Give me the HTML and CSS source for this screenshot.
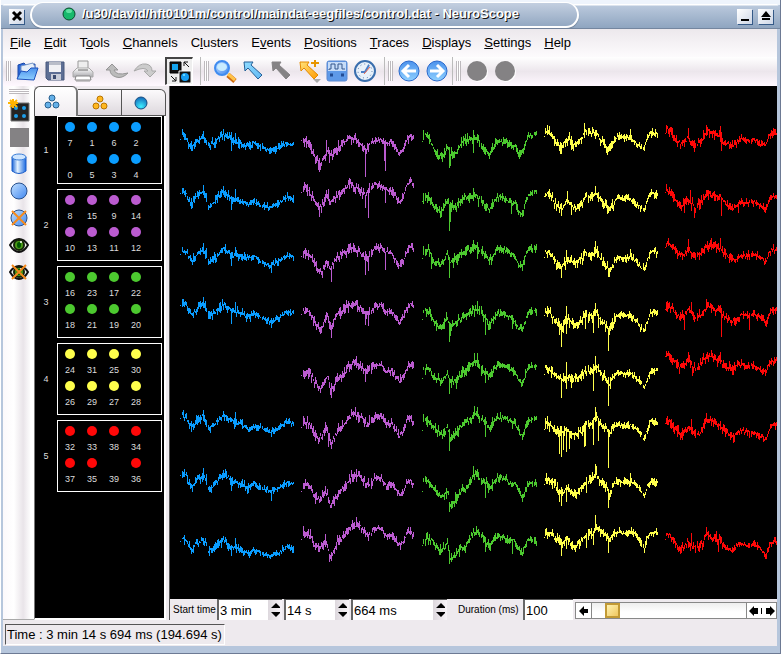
FILE: index.html
```
<!DOCTYPE html>
<html lang="en">
<head>
<meta charset="utf-8">
<title>NeuroScope</title>
<link rel="stylesheet" href="styles.css">
</head>
<body>
<svg width="0" height="0" class="defs" aria-hidden="true">
  <defs>
    <linearGradient id="blue" x1="0" y1="0" x2="1" y2="1"><stop offset="0" stop-color="#c4e2ff"/><stop offset="1" stop-color="#3f86f0"/></linearGradient>
    <linearGradient id="sky" x1="0" y1="0" x2="1" y2="1"><stop offset="0" stop-color="#8fdcff"/><stop offset="1" stop-color="#62b8f4"/></linearGradient>
    <linearGradient id="blueV" x1="0" y1="0" x2="0" y2="1"><stop offset="0" stop-color="#4c92ec"/><stop offset="1" stop-color="#8fd0ff"/></linearGradient>
    <linearGradient id="gold" x1="0" y1="0" x2="1" y2="1"><stop offset="0" stop-color="#ffe27a"/><stop offset="1" stop-color="#ff9a00"/></linearGradient>
    <linearGradient id="barrel" x1="0" y1="0" x2="1" y2="0"><stop offset="0" stop-color="#1c66d8"/><stop offset=".4" stop-color="#e4f3ff"/><stop offset="1" stop-color="#1c6ae0"/></linearGradient>
    <radialGradient id="aqua" cx=".5" cy=".8" r=".8"><stop offset="0" stop-color="#3ff0ff"/><stop offset="1" stop-color="#1166b8"/></radialGradient>
    <linearGradient id="paper" x1="0" y1="0" x2="0" y2="1"><stop offset="0" stop-color="#ffffff"/><stop offset="1" stop-color="#aaaaae"/></linearGradient>
  </defs>
  <symbol id="arrow" viewBox="0 0 24 24"><path d="M3 3h9l-2 3 11 10-4 4L7 9l-3 3z" stroke-width="1" stroke-linejoin="round"/></symbol>
  <symbol id="eye" viewBox="0 0 20 20"><path d="M1 10Q5 4 10 4t9 6q-4 7-9 7T1 10z" fill="#f4f4ee" stroke="#111" stroke-width="2"/><circle cx="10" cy="10" r="5" fill="#4a9a16" stroke="#152408" stroke-width="2"/><ellipse cx="10" cy="10" rx="2" ry="3" fill="#050"/><circle cx="12" cy="7" r="1" fill="#fff"/></symbol>
  <symbol id="trio" viewBox="0 0 16 16"><g stroke-width="1"><circle cx="8" cy="4" r="3"/><circle cx="4" cy="11" r="3"/><circle cx="12" cy="11" r="3"/></g></symbol>
</svg>

<div class="window">
  <header class="titlebar">
    <button class="winbtn" aria-label="Close"><svg width="12" height="12"><path d="M2 2l8 8M10 2l-8 8" stroke="#000" stroke-width="3"/></svg></button>
    <div class="caption"><svg width="14" height="14"><circle cx="7" cy="7" r="6" fill="#17b96c" stroke="#0a4a2c"/><ellipse cx="7" cy="4" rx="3" ry="2" fill="#5fe0a0"/></svg><h1>/u30/david/hft0101m/control/maindat-eegfiles/control.dat - NeuroScope</h1></div>
    <span class="fill"></span>
    <button class="winbtn" aria-label="Minimize"><svg width="12" height="12"><path d="M2 10h8" stroke="#000" stroke-width="2"/></svg></button>
    <button class="winbtn" aria-label="Maximize"><svg width="12" height="12"><path d="M6 1l5 6H1zM2 8h8v2H2z"/></svg></button>
  </header>

  <div class="content">
    <nav class="menu">
      <a href="#"><u>F</u>ile</a><a href="#"><u>E</u>dit</a><a href="#">T<u>o</u>ols</a><a href="#"><u>C</u>hannels</a><a href="#">C<u>l</u>usters</a><a href="#">E<u>v</u>ents</a><a href="#"><u>P</u>ositions</a><a href="#"><u>T</u>races</a><a href="#"><u>D</u>isplays</a><a href="#"><u>S</u>ettings</a><a href="#"><u>H</u>elp</a>
    </nav>

    <div class="toolbar">
      <i class="grip"></i>
      <button class="tool" aria-label="Open"><svg width="24" height="24"><path d="M3 20V6l6-2 2 2 9-1v8" fill="#2a68d8" stroke="#1a48a8"/><path d="M6 7l12-3 2 4v6H6z" fill="#e6eef8" stroke="#7796c8"/><path d="M2 20l4-8 6 1 4-4 7 0-4 12z" fill="url(#blueV)" stroke="#1c50bc"/></svg></button>
      <button class="tool" aria-label="Save"><svg width="24" height="24"><path d="M3 3h18v18H5l-2-2z" fill="#5d6e94" stroke="#49597c"/><path d="M6 3h12v10H6z" fill="#f1f1f4"/><path d="M6 3h12v3H6z" fill="#b9bdc8"/><path d="M8 15h10v6H8z" fill="#c8ccd8"/><path d="M10 16h3v4h-3z" fill="#3c4b70"/></svg></button>
      <button class="tool" aria-label="Print"><svg width="24" height="24"><path d="M7 2h10v9H7z" fill="#eee" stroke="#999"/><path d="M2 13l4-4h12l4 4v5H2z" fill="url(#paper)" stroke="#aaa"/><path d="M7 11h10" stroke="#666"/><path d="M5 17h14l1 4H4z" fill="#fff" stroke="#888"/><path d="M5 22h14" stroke="#999"/></svg></button>
      <i class="space"></i>
      <button class="tool" aria-label="Undo"><svg width="24" height="24"><path d="M1 11l6-6 6 6H9q2 6 14 3-6 6-12 4-6-2-6-7z" fill="#bcbcbc" stroke="#959595"/></svg></button>
      <button class="tool" aria-label="Redo"><svg width="24" height="24"><path d="M23 12l-6 6-6-6h4q-3-5-14 0 5-8 12-7 6 1 6 7z" fill="#ccc" stroke="#a8a8a8"/></svg></button>
      <i class="space"></i>
      <button class="tool pressed" aria-label="Show labels"><svg width="24" height="24"><path d="M2 2h11v11H2z" fill="#111" stroke="#000"/><path d="M4 4h6v6H4z" fill="#15a4ee"/><path d="M11 11h12v12H11z" fill="#111" stroke="#fff"/><circle cx="17" cy="17" r="4" fill="#159cf0"/><circle cx="16" cy="15" r="1" fill="#80e8ff"/><path d="M16 6V2h4M16 2l5 5M3 16l5 5M8 17v4H4" fill="none" stroke="#111"/></svg></button>
      <i class="sep"></i><i class="grip"></i>
      <button class="tool" aria-label="Zoom"><svg width="24" height="24"><path d="M15 16l7 6" stroke="#d06a10" stroke-width="5"/><path d="M15 15l7 6" stroke="#ffc34a" stroke-width="3"/><circle cx="9" cy="9" r="7" fill="url(#blue)" stroke="#3f8cf0" stroke-width="2"/><ellipse cx="9" cy="8" rx="5" ry="4" fill="#c8ecff"/></svg></button>
      <button class="tool" aria-label="Select"><svg width="24" height="24" fill="url(#sky)" stroke="#245f96"><use href="#arrow"/></svg></button>
      <button class="tool" aria-label="Draw time line"><svg width="24" height="24" fill="#858385" stroke="#858385"><use href="#arrow"/></svg></button>
      <button class="tool" aria-label="Add event"><svg width="24" height="24"><g fill="url(#gold)" stroke="#e58a00"><use href="#arrow"/></g><path d="M18 1v7M14 4h8" stroke="#e79500" stroke-width="2"/><path d="M16 20h8l-4 4z" fill="#aaa"/></svg></button>
      <button class="tool" aria-label="Measure"><svg width="24" height="24"><rect x="2" y="2" width="20" height="20" rx="2" fill="#5e99e8" stroke="#5a88d0"/><rect x="3" y="3" width="18" height="9" fill="#c6dcf8"/><path d="M4 11V10h2V5h4v5h3V5h4v5h3" fill="none" stroke="#35578c"/><path d="M5 16h3M16 16h3" stroke="#224c94" stroke-width="3"/></svg></button>
      <button class="tool" aria-label="Time"><svg width="24" height="24"><circle cx="12" cy="12" r="10" fill="#e8f1fa" stroke="#3a6fae" stroke-width="2"/><circle cx="12" cy="12" r="7" fill="none" stroke="#5577a8" stroke-dasharray="1 3"/><path d="M12 13l4-7M12 13H8" stroke="#4b80c8" stroke-width="2"/><path d="M11 15l6-7" stroke="#f06a50"/></svg></button>
      <i class="sep near"></i><i class="grip"></i>
      <button class="tool" aria-label="Previous"><svg width="24" height="24"><circle cx="12" cy="12" r="10" fill="url(#blueV)" stroke="#2b69cc"/><path d="M19 12H7M12 6l-6 6 6 6" fill="none" stroke="#fff" stroke-width="3"/></svg></button>
      <button class="tool" aria-label="Next"><svg width="24" height="24"><circle cx="12" cy="12" r="10" fill="url(#blueV)" stroke="#2b69cc"/><path d="M5 12h12M12 6l6 6-6 6" fill="none" stroke="#fff" stroke-width="3"/></svg></button>
      <i class="sep tight"></i><i class="grip"></i>
      <button class="tool" aria-label="Previous event" disabled><svg width="24" height="24"><circle cx="13" cy="13" r="10" fill="#fff"/><circle cx="12" cy="12" r="10" fill="#848284"/></svg></button>
      <button class="tool" aria-label="Next event" disabled><svg width="24" height="24"><circle cx="13" cy="13" r="10" fill="#fff"/><circle cx="12" cy="12" r="10" fill="#848284"/></svg></button>
    </div>

    <main class="work">
      <aside class="side">
        <i class="grip flat"></i>
        <button class="tool" aria-label="New group"><svg width="24" height="24"><path d="M4 5h18v18H4z" fill="#242424" stroke="#777"/><g fill="#1d9de8"><circle cx="9" cy="10" r="2"/><circle cx="17" cy="10" r="2"/><circle cx="9" cy="18" r="2"/><circle cx="17" cy="18" r="2"/></g><path d="M6 1v9M1 5h10M3 2l7 7M10 2L3 9" stroke="#ffb400" stroke-width="2"/></svg></button>
        <button class="tool" aria-label="Discard" disabled><svg width="24" height="24"><path d="M3 3h19v19H3z" fill="#848284"/></svg></button>
        <button class="tool" aria-label="Keep"><svg width="24" height="24"><path d="M5 5v14q7 5 14 0V5z" fill="url(#barrel)" stroke="#1b5cc8"/><ellipse cx="12" cy="5" rx="7" ry="3" fill="#cfe6ff" stroke="#3d80d8"/></svg></button>
        <button class="tool" aria-label="Show"><svg width="24" height="24"><circle cx="12" cy="12" r="8" fill="url(#blue)" stroke="#28508c"/></svg></button>
        <button class="tool" aria-label="Hide"><svg width="24" height="24"><circle cx="12" cy="12" r="8" fill="url(#blue)" stroke="#28508c"/><path d="M5 5l14 14M19 5L5 19" stroke="#f58a1c" stroke-width="2"/></svg></button>
        <button class="tool" aria-label="Visible"><svg width="20" height="20"><use href="#eye"/></svg></button>
        <button class="tool" aria-label="Invisible"><svg width="20" height="20"><use href="#eye"/><path d="M3 3l14 14M17 3L3 17" stroke="#f58a1c" stroke-width="2"/></svg></button>
      </aside>

      <section class="palette">
        <div class="tabs">
          <button class="tab active" aria-label="Anatomical groups"><svg width="16" height="16" fill="#64b0e8" stroke="#28608f"><use href="#trio"/></svg></button>
          <button class="tab" aria-label="Spike groups"><svg width="16" height="16" fill="#ffb820" stroke="#b87400"><use href="#trio"/></svg></button>
          <button class="tab" aria-label="Units"><svg width="16" height="16"><circle cx="8" cy="8" r="6" fill="url(#aqua)" stroke="#174d80"/></svg></button>
        </div>
        <div class="groups" id="groups"></div>
      </section>

      <i class="splitter"></i>

      <section class="view">
        <svg class="traces" id="traces" role="img" aria-label="Channel traces"></svg>
        <form class="range">
          <label class="lab" for="min">Start time</label>
          <span class="spin s1"><input id="min" value="3 min"><b><svg width="12" height="14"><path d="M6 0l5 5H1zM6 14l5-5H1z"/></svg></b></span>
          <span class="spin s1"><input aria-label="Seconds" value="14 s"><b><svg width="12" height="14"><path d="M6 0l5 5H1zM6 14l5-5H1z"/></svg></b></span>
          <span class="spin s2"><input aria-label="Milliseconds" value="664 ms"><b><svg width="12" height="14"><path d="M6 0l5 5H1zM6 14l5-5H1z"/></svg></b></span>
          <label class="lab dur" for="dur">Duration (ms)</label>
          <input class="duration" id="dur" value="100">
          <div class="scroll">
            <button type="button" aria-label="Back"><svg width="10" height="10"><path d="M0 5l5-5v3h4v4H5v3z"/></svg></button>
            <span class="track"><i class="thumb"></i></span>
            <button type="button" class="pair" aria-label="Back or forward"><svg width="26" height="10"><path d="M0 5l5-5v2h4v6H5v2zM12 2h1v6h-1zM26 5l-5-5v2h-4v6h4v2z"/></svg></button>
          </div>
        </form>
      </section>
    </main>

    <footer class="status"><p>Time : 3 min 14 s 694 ms (194.694 s)</p></footer>
  </div>
</div>
<script src="script.js"></script>
</body>
</html>
```
FILE: styles.css
```
* { box-sizing: border-box; }
body { margin: 0; background: #b4c4dc; font: 13px/14px "Liberation Sans", Arial, sans-serif; color: #000; overflow: hidden; }
button { border: 0; padding: 0; background: none; }
svg { display: block; flex: none; }
.defs { position: absolute; }

.window { display: flex; flex-direction: column; height: 100vh; background: linear-gradient(#eef4fc 0 5px, #b6c6dc 5px); border-bottom: 1px solid #6d7a94; border-right: 1px solid #6d7a94; border-left: 1px solid #fff; }
.titlebar { display: flex; align-items: center; flex: none; height: 29px; padding: 2px 7px 1px 8px; gap: 6px; background: linear-gradient(transparent 0 4px, #fff 4px 5px, #b9c8dc 6px, #8fa5c0); border-bottom: 1px solid #74869f; border-radius: 12px 12px 0 0; }
.winbtn { display: grid; place-items: center; width: 15px; height: 15px; margin-top: 3px; background: linear-gradient(135deg, #fff, #cdd6e6); box-shadow: 1px 1px 0 #355a88; }
.caption { display: flex; align-items: center; gap: 6px; width: 549px; height: 26px; padding-left: 30px; border: 2px solid #fff; border-top-width: 1px; border-radius: 13px; background: linear-gradient(#c3cfe0, #93a8c2); box-shadow: 0 1px 1px #708098; }
.caption h1 { margin: 0; font-size: 13px; line-height: 14px; font-weight: bold; color: #fff; text-shadow: 1px 1px 0 #111; white-space: nowrap; }
.fill { flex: 1; }

.content { display: flex; flex-direction: column; flex: 1; min-height: 0; margin: 0 3px 7px 2px; background: #eeeaee; }
.menu { display: flex; gap: 13px; height: 28px; padding: 7px 7px 0; background: linear-gradient(#ece8ec, #fdfbfd); }
.menu a { color: #000; text-decoration: none; white-space: nowrap; }
.toolbar { display: flex; align-items: flex-start; height: 29px; padding-left: 3px; background: linear-gradient(#fff, #ece6ec 50%, #fff8ff); }
.tool { display: grid; place-items: center; width: 28px; height: 28px; flex: none; }
.pressed { border: 1px solid #fff; border-top: 2px solid #444; border-left: 2px solid #444; background: #eee; }
.grip { width: 5px; height: 20px; margin: 4px 2px 0 0; background: repeating-linear-gradient(90deg, #bdb9bd 0 1px, #fff 1px 2px); flex: none; }
.space { width: 6px; }
.sep { width: 1px; height: 28px; margin: 0 3px 0 7px; background: #bbb; }
.sep.near { margin-left: 5px; }
.sep.tight { margin-left: 1px; }

.work { display: flex; flex: 1; min-height: 0; }
.side { display: flex; flex-direction: column; align-items: center; width: 31px; flex: none; padding-top: 3px; background: linear-gradient(90deg, #fbf8fb, #fff 35%, #e9e4e9 65%, #fff 90%); border-bottom: 1px solid #aaa; }
.side .tool { height: 27px; }
.grip.flat { width: 20px; height: 5px; margin: 0 0 2px; background: repeating-linear-gradient(#bdb9bd 0 1px, #fff 1px 2px); }

.palette { display: flex; flex-direction: column; width: 132px; flex: none; }
.tabs { display: grid; grid-template-columns: repeat(3, 1fr); align-items: end; height: 30px; background: #eeeaee; }
.tab { display: grid; place-items: center; height: 27px; border: 1px solid #555; border-left: 0; background: linear-gradient(#fcfafc, #ddd8dd); }
.tab:last-child { border-radius: 0 6px 0 0; padding-right: 6px; }
.tab.active { height: 30px; border-left: 1px solid #555; border-right: 2px solid #777; border-bottom: 0; border-radius: 6px 6px 0 0; background: linear-gradient(#fff, #f0ecf0); padding-right: 8px; }
.groups { display: flex; flex-direction: column; gap: 5px; flex: 1; min-height: 0; background: #000; border-left: 1px solid #777; border-right: 2px solid #fff; border-bottom: 2px solid #fff; color: #ddd; font-size: 9px; line-height: 10px; }
.group { display: flex; align-items: center; }
.group > b { width: 22px; font-weight: normal; text-align: center; }
.pads { display: grid; grid-template-columns: repeat(4, 22px); grid-auto-rows: 32px; flex: 1; margin-right: 2px; padding: 5px 0 1px 1px; border: 1px solid #fff; }
.pads span { display: flex; flex-direction: column; align-items: center; gap: 6px; }
.pads i { width: 10px; height: 10px; border-radius: 50%; background: currentColor; }
.pads em { font-style: normal; color: #ddd; }
.group:first-child .pads { height: 68px; }
.c1 i { color: #0a9dff; } .c2 i { color: #bb5bd0; } .c3 i { color: #4cc92f; } .c4 i { color: #ffff4c; } .c5 i { color: #ff0808; }
.pads .off { visibility: hidden; }
.splitter { width: 4px; flex: none; background: #eeeaee; border-right: 1px solid #555; }

.view { display: flex; flex-direction: column; flex: 1; min-width: 0; background: #000; }
.traces { width: 100%; flex: 1; min-height: 0; }
.range { display: flex; align-items: stretch; gap: 2px; height: 21px; flex: none; background: #eeeaee; }
.lab { font-size: 10px; line-height: 22px; width: 45px; padding-left: 3px; flex: none; white-space: nowrap; }
.lab.dur { width: 72px; padding-left: 9px; }
.spin { display: flex; flex: none; background: #fff; border-top: 1px solid #555; border-left: 2px solid #666; }
.spin input { flex: 1; min-width: 0; }
.s1 { width: 65px; } .s2 { width: 96px; }
.range input { border: 0; padding: 2px 0 0 1px; background: #fff; font: 13px/14px "Liberation Sans", Arial, sans-serif; }
.spin b { display: grid; place-items: center; width: 14px; background: linear-gradient(90deg, #ddd8dd, #f8f4f8); }
.spin b svg { width: 10px; }
.range .duration { width: 50px; flex: none; border-top: 1px solid #555; border-left: 2px solid #666; }
.scroll { display: flex; flex: 1; height: 17px; margin-top: 3px; border: 1px solid #888; background: #eee; }
.scroll button { display: grid; place-items: center; width: 16px; background: #fff; border-right: 1px solid #888; }
.scroll .pair { width: 30px; border-right: 0; border-left: 1px solid #888; }
.track { flex: 1; padding-left: 13px; background: linear-gradient(#eee, #fff 60%); }
.thumb { display: block; width: 15px; height: 15px; border: 2px solid #c29a35; background: linear-gradient(135deg, #fff2b0, #f0c860); }

.status { height: 26px; flex: none; padding: 4px 2px; }
.status p { display: inline-block; margin: 0; padding: 3px 2px 2px 1px; border: 1px solid #fff; border-top-color: #555; border-left-color: #555; }
```
FILE: script.js
```
// Electrode groups: channel ids in display order; ids in "off" have no dot.
const groups = [
  { ids: [7, 1, 6, 2, 0, 5, 3, 4], off: [0] },
  { ids: [8, 15, 9, 14, 10, 13, 11, 12], off: [] },
  { ids: [16, 23, 17, 22, 18, 21, 19, 20], off: [] },
  { ids: [24, 31, 25, 30, 26, 29, 27, 28], off: [] },
  { ids: [32, 33, 38, 34, 37, 35, 39, 36], off: [39] }
];
document.getElementById('groups').innerHTML = groups.map((g, n) =>
  `<div class="group c${n + 1}"><b>${n + 1}</b><div class="pads">` +
  g.ids.map(id => `<span><i${g.off.includes(id) ? ' class="off"' : ''}></i><em>${id}</em></span>`).join('') +
  '</div></div>').join('');

// Recorded traces. Knot positions and levels are stored at three units per pixel.
// Row: [section top in px, first-sample level, levels, spikes as position/level pairs]
const columns = [
  { color: '#0a9dff', left: 10, from: 30, amp: 8, gaps: [1, 27, 81],
    x: [36,48,54,66,75,96,108,114,126,144,159,174,190,210,235,249,270,300,325,350,368],
    rows: [
      [24,88,[75,82,98,110,95,80,90,104,100,88,70,82,92,100,108,98,110,120,110,96,103],[184,120,184,66,196,70,99,64]],
      [24,250,[238,248,270,275,258,245,262,288,282,262,243,255,268,272,282,272,285,290,278,260,268],[184,298,196,237,99,225,64,293]],
      [24,433,[420,422,438,452,438,415,430,452,450,435,415,425,435,438,444,436,452,466,452,433,440],[184,465,196,410,99,398,304,486]],
      [24,586,[575,580,598,614,600,582,595,612,612,598,580,592,603,606,620,608,620,632,622,604,606],[184,640,196,576,99,562,304,650]],
      [254,235,[225,230,245,258,245,228,245,262,258,240,225,235,245,250,265,255,262,275,262,242,250],[196,215,99,210,64,272,304,287]],
      [254,406,[395,400,425,438,420,405,415,438,438,418,400,410,425,430,443,430,440,455,442,425,430],[304,480,99,384,184,450]],
      [254,604,[592,600,615,628,610,600,610,632,625,612,598,610,622,628,640,628,636,648,638,618,628],[184,644,196,594,64,640]]
    ] },
  { color: '#bb5bd0', left: 131, from: 394, amp: 9, gaps: [1, 69],
    x: [399,414,425,432,445,455,463,473,480,492,503,520,535,550,570,588,600,615,635,648,665,688,700,710,722,731],
    rows: [
      [24,91,[90,92,115,135,158,158,140,115,130,130,115,92,85,85,100,120,100,90,90,100,95,132,110,88,78,85],[448,182,586,197,646,180,644,150,478,157,469,90]],
      [24,247,[228,235,255,270,290,285,270,255,280,265,255,240,220,225,240,255,235,220,225,240,240,278,255,225,210,225],[448,318,595,320,646,276,475,238,586,290]],
      [24,439,[425,430,440,455,480,485,465,455,475,460,440,428,415,410,425,445,432,412,410,425,430,468,450,420,405,415],[484,512,586,492,595,480,646,476]],
      [24,613,[597,605,618,635,650,650,630,615,660,630,610,600,585,580,588,612,602,590,582,605,600,640,620,595,580,590],[484,680,586,642,595,644]],
      [254,106,[92,92,105,125,140,145,120,105,150,140,115,100,80,68,75,98,85,75,75,98,88,122,105,82,72,76],[484,170,558,48,586,122]],
      [254,262,[242,245,262,285,290,290,270,270,305,295,270,258,235,220,228,252,245,230,225,250,250,285,270,240,232,248],[435,299,475,318,466,246]],
      [254,454,[430,433,445,470,475,475,455,460,497,480,460,445,420,405,405,432,430,412,415,435,430,462,455,425,418,433],[435,488,466,438,558,388]],
      [254,598,[575,580,590,615,618,618,605,615,652,630,605,590,565,552,558,585,580,562,568,588,585,615,605,575,575,585],[558,532,466,582,478,662]]
    ] },
  { color: '#4cc92f', left: 252, from: 36, amp: 9, gaps: [2, 58, 111],
    x: [47,60,68,80,92,103,112,118,124,140,152,165,180,195,205,215,227,237,248,260,280,295,308,315,326,337,347,356,378],
    rows: [
      [24,94,[75,88,112,135,140,130,105,130,130,125,100,88,88,82,92,110,118,130,112,92,95,100,108,110,130,125,90,75,72],[118,170,121,165,190,60,190,125,202,72]],
      [24,274,[258,270,290,295,305,285,270,290,290,290,270,258,258,250,262,278,290,295,280,262,260,272,280,280,305,312,270,255,245],[118,360,121,332,190,234,205,288,304,308]],
      [24,445,[415,425,450,458,468,445,425,450,455,445,432,425,415,408,415,425,435,455,440,415,418,425,432,440,465,468,430,415,412],[118,500,64,473,190,390,202,445]],
      [24,628,[600,612,630,650,655,635,625,645,645,635,625,615,602,598,600,608,625,645,625,610,612,618,622,640,655,658,625,603,603],[118,692,121,675,202,572,226,672,307,655]],
      [254,115,[82,90,112,118,122,110,95,128,125,118,100,90,75,65,75,90,95,105,92,73,75,82,90,98,118,130,95,77,78],[118,158,139,145,193,40,202,40,226,125]],
      [254,271,[240,248,258,275,282,275,255,290,295,280,258,248,240,218,228,232,248,265,248,235,232,240,245,250,275,290,252,238,238],[118,330,226,288,193,198,202,200,307,264]],
      [254,454,[420,432,440,460,468,460,450,495,490,470,450,445,420,400,410,420,430,445,430,412,410,425,430,430,455,475,440,428,430],[118,512,226,470,190,378,202,388,139,490]],
      [254,616,[597,600,600,622,630,620,600,655,650,638,625,618,590,572,580,585,605,615,600,588,588,598,595,605,630,640,605,595,600],[118,668,226,633,307,640]]
    ] },
  { color: '#ffff4c', left: 374, from: 402, amp: 9, gaps: [43, 98],
    x: [410,420,432,445,456,468,478,490,502,515,524,535,547,558,568,578,588,598,608,620,640,660,675,690,702,710,720,740],
    rows: [
      [24,79,[62,70,88,105,110,88,88,100,100,85,60,65,68,65,85,100,110,115,100,78,80,82,98,112,115,85,68,68],[454,128,523,40,484,117,661,57]],
      [24,259,[250,255,275,290,292,270,275,295,290,280,255,255,255,250,262,280,285,300,285,265,265,268,280,290,300,270,252,250],[556,228,454,315,484,312,472,243]],
      [24,440,[425,432,450,468,470,450,450,460,455,445,425,432,432,425,440,455,465,490,465,440,440,440,450,470,475,450,425,425],[454,500,556,393,595,497,469,420,661,416]],
      [24,615,[600,612,628,645,650,625,630,645,640,630,610,615,620,600,625,635,645,660,635,615,615,612,630,650,660,635,608,607],[454,708,448,672,460,665,469,588,469,668,526,655,550,665,565,650,595,720,556,578]],
      [254,103,[82,92,100,112,118,108,105,112,108,105,90,95,90,80,95,110,115,130,105,98,100,98,110,125,140,118,95,90],[454,170,469,65,469,145,484,140,550,150,595,194,556,48]],
      [254,268,[248,255,268,275,275,268,275,285,283,270,250,250,245,225,250,255,265,280,260,250,255,255,262,280,295,270,245,245],[448,340,454,348,460,328,469,332,478,325,523,318,526,315,550,312,565,300,595,380,556,202]],
      [254,433,[415,425,432,450,460,440,450,460,458,440,428,420,410,400,415,430,440,460,435,422,425,425,430,450,465,440,425,425],[448,482,454,494,469,482,556,373,595,500,529,455,661,398]],
      [254,592,[577,580,590,600,610,590,605,620,615,600,585,580,580,560,572,580,588,600,582,572,578,572,582,605,625,595,577,577],[454,645,469,625,556,526,595,635,529,620,550,612]]
    ] },
  { color: '#ff0808', left: 495, from: 765, amp: 9, gaps: [31, 85],
    x: [772,785,795,808,822,834,845,855,868,880,890,905,918,930,940,952,965,980,995,1010,1030,1045,1058,1067,1074,1082,1101],
    rows: [
      [24,70,[55,68,88,98,98,80,98,105,95,80,58,65,70,75,95,100,105,92,85,90,88,95,105,105,80,68,68],[853,122,934,120,889,45,835,54,931,48]],
      [24,247,[238,252,270,280,285,265,280,290,280,268,245,255,258,262,275,285,298,285,275,280,275,285,288,298,275,260,258],[853,320,934,315,769,222,840,240,823,306,985,305]],
      [24,412,[400,410,425,435,435,415,430,435,430,418,402,405,412,415,430,438,450,445,435,438,430,440,445,460,435,418,418],[774,384,835,388,931,384]],
      [24,597,[585,595,610,622,618,595,615,620,620,605,585,590,598,602,615,622,635,625,612,615,608,618,625,638,615,600,595],[823,658,934,678,1018,658,889,568,844,576]],
      [254,49,[40,50,65,80,75,55,75,85,75,60,40,48,55,60,75,80,90,75,72,80,75,85,90,100,75,60,58],[835,35,847,104,808,94,931,36]],
      [254,250,[240,250,268,278,275,258,272,275,280,258,238,245,250,255,268,278,290,275,270,275,275,285,290,302,275,255,250],[889,220,844,238,817,296,1018,292]],
      [254,597,[580,592,608,625,620,600,618,622,620,600,580,592,595,600,615,622,632,615,608,618,610,620,632,650,620,608,603],[889,562,844,578,811,640,925,634]]
    ] }
];

let seed = 7;
const rand = () => (seed = (seed * 16807) % 2147483647) / 2147483647;

function level(xs, ys, x) {
  if (x <= xs[0]) return ys[0];
  for (let i = 1; i < xs.length; i++) {
    if (x <= xs[i]) return ys[i - 1] + (ys[i] - ys[i - 1]) * (x - xs[i - 1]) / (xs[i] - xs[i - 1]);
  }
  return ys[ys.length - 1];
}

function tracePath(col, [top, first, ys, spikes]) {
  const bar = (x, a, b) => `M${col.left + x} ${top + Math.round(a / 3)}h1V${top + Math.round(b / 3) + 1}h-1z`;
  let d = bar(0, first, first);
  const end = Math.round((col.x[col.x.length - 1] - col.from) / 3);
  for (let x = 1; x <= end; x++) {
    if (col.gaps.includes(x)) continue;
    const pos = col.from + x * 3;
    const size = col.amp * (x > 70 ? 0.8 : 1.1);
    const mid = level(col.x, ys, pos) + (rand() - 0.5) * size;
    let a = mid - (0.1 + rand() ** 2 * 1.7) * size;
    let b = mid + (0.1 + rand() ** 2 * 1.7) * size;
    for (let i = 0; i < spikes.length; i += 2) {
      if (Math.round((spikes[i] - col.from) / 3) === x) {
        a = Math.min(a, spikes[i + 1]);
        b = Math.max(b, spikes[i + 1]);
      }
    }
    d += bar(x, a, b);
  }
  return d;
}

document.getElementById('traces').innerHTML = columns.map(col =>
  `<path shape-rendering="crispEdges" fill="${col.color}" d="${col.rows.map(r => tracePath(col, r)).join('')}"/>`).join('');
```
